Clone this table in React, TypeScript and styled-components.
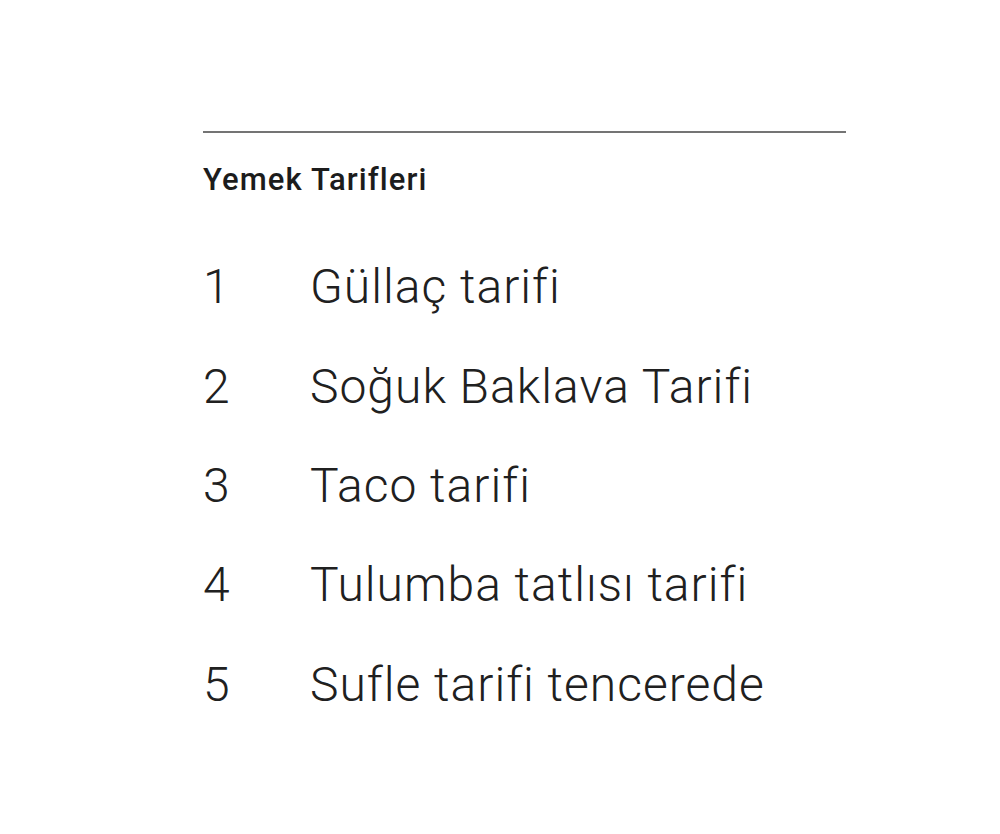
import * as React from 'react'
import styled, { createGlobalStyle } from 'styled-components'

const GlobalStyle = createGlobalStyle`
  html, body {
    margin: 0;
    padding: 0;
    background: #ffffff;
  }

  body {
    font-family: Roboto, "Noto Sans", sans-serif;
    color: #222222;
  }
`

const recipes = [
  'Güllaç tarifi',
  'Soğuk Baklava Tarifi',
  'Taco tarifi',
  'Tulumba tatlısı tarifi',
  'Sufle tarifi tencerede',
]

const Page = styled.div`
  width: 1000px;
  height: 834px;
  display: flex;
  padding: 131px 0 0 203px;
  box-sizing: border-box;
`

const Panel = styled.section`
  width: 643px;
  border-top: 2px solid #747474;
`

const Title = styled.h2`
  margin: 28px 0 0;
  font-size: 31px;
  font-weight: 500;
  letter-spacing: 1.1px;
  line-height: 38px;
  color: #1c1c1c;
`

const List = styled.ol`
  list-style: none;
  margin: 38px 0 0;
  padding: 0;
  display: grid;
`

const Item = styled.li`
  display: grid;
  grid-template-columns: 107px 1fr;
  align-items: center;
  height: 99.4px;
  font-size: 48px;
  font-weight: 300;
  letter-spacing: 1px;
  color: #202020;
`

const Rank = styled.span`
  letter-spacing: 0;
`

const Name = styled.span``

const App: React.FC = () => {
  return (
    <>
      <GlobalStyle />
      <Page>
        <Panel>
          <Title>Yemek Tarifleri</Title>
          <List>
            {recipes.map((name, i) => (
              <Item key={name}>
                <Rank>{i + 1}</Rank>
                <Name>{name}</Name>
              </Item>
            ))}
          </List>
        </Panel>
      </Page>
    </>
  )
}

export default App
